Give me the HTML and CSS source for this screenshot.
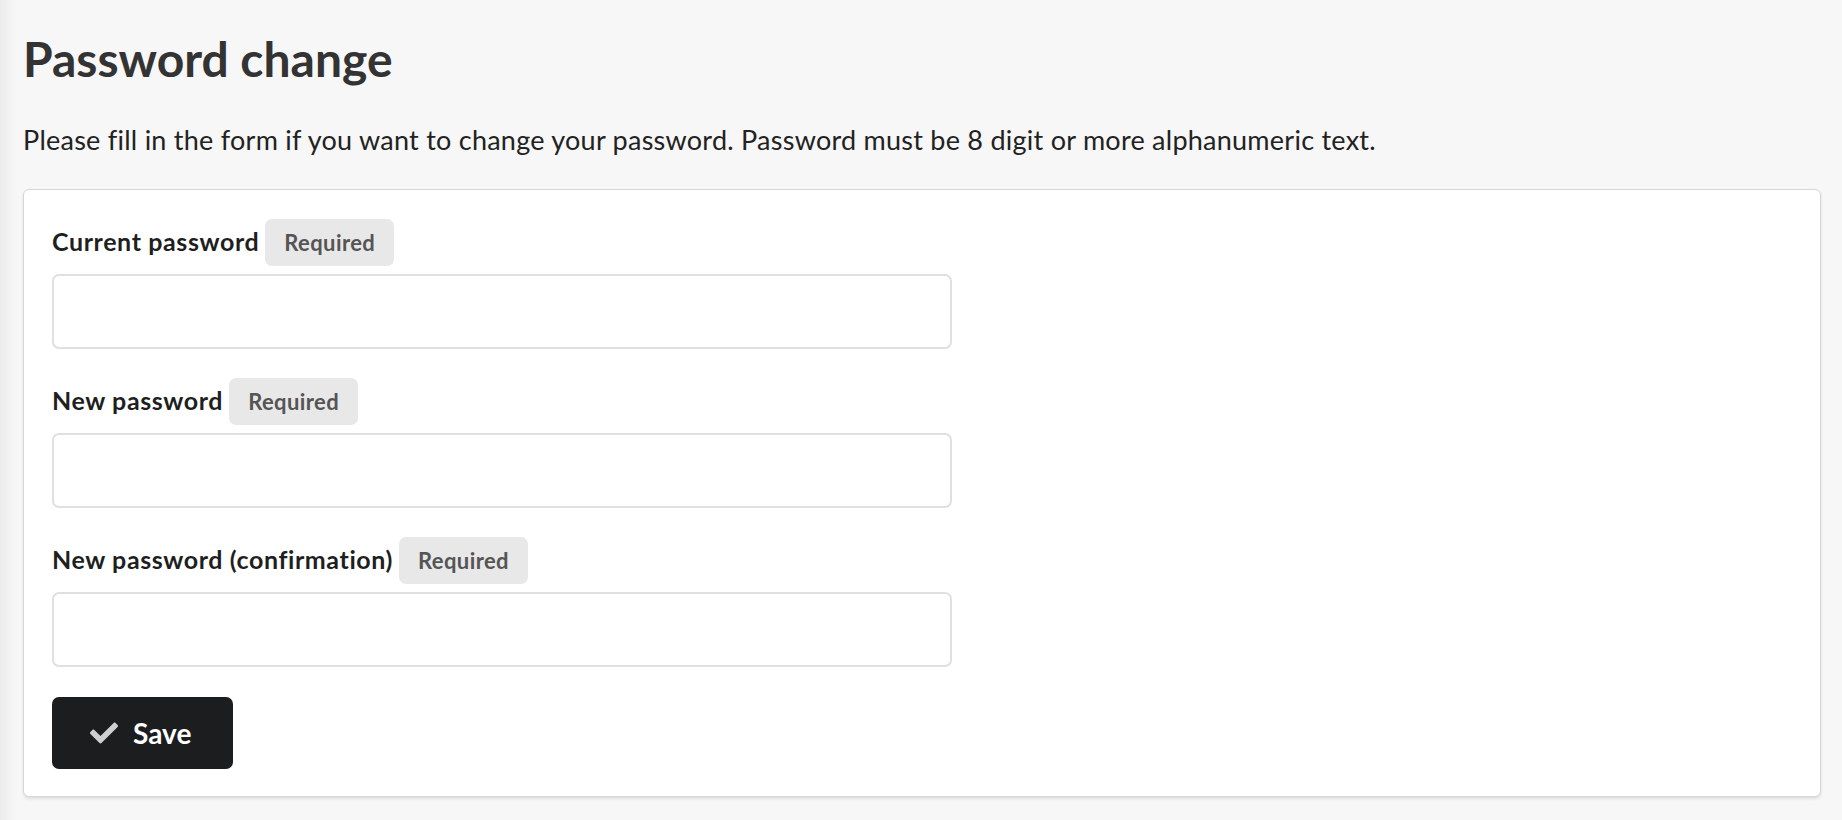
FILE: index.html
```html
<!DOCTYPE html>
<html lang="en">
<head>
<meta charset="utf-8">
<title>Password change</title>
<link rel="stylesheet" href="styles.css">
</head>
<body>
<main class="page">
  <h1 class="page-title">Password change</h1>
  <p class="page-lead">Please fill in the form if you want to change your password. Password must be 8 digit or more alphanumeric text.</p>

  <form class="card">
    <div class="field">
      <div class="field-head">
        <label class="field-label" for="old_password">Current password</label>
        <span class="badge">Required</span>
      </div>
      <input class="field-input" type="password" id="old_password" name="old_password">
    </div>

    <div class="field">
      <div class="field-head">
        <label class="field-label" for="new_password1">New password</label>
        <span class="badge">Required</span>
      </div>
      <input class="field-input" type="password" id="new_password1" name="new_password1">
    </div>

    <div class="field">
      <div class="field-head">
        <label class="field-label" for="new_password2">New password (confirmation)</label>
        <span class="badge">Required</span>
      </div>
      <input class="field-input" type="password" id="new_password2" name="new_password2">
    </div>

    <div class="actions">
      <button class="btn-save" type="submit">
        <svg class="btn-icon" viewBox="0 0 512 512" aria-hidden="true">
          <path d="M173.898 439.404l-166.4-166.4c-9.997-9.997-9.997-26.206 0-36.204l36.203-36.204c9.997-9.998 26.207-9.998 36.204 0L192 312.69 432.095 72.596c9.997-9.997 26.207-9.997 36.204 0l36.203 36.204c9.997 9.997 9.997 26.206 0 36.204l-294.4 294.401c-9.998 9.997-26.207 9.997-36.204-.001z"/>
        </svg>
        <span>Save</span>
      </button>
    </div>
  </form>
</main>
</body>
</html>
```

FILE: styles.css
```css
* {
  box-sizing: border-box;
}

html,
body {
  height: 100%;
}

body {
  margin: 0;
  font-family: Lato, "Noto Sans", "Liberation Sans", sans-serif;
  color: #222;
  background: linear-gradient(to right, #ececec 0, #f7f7f7 17px) #f7f7f7;
}

.page {
  padding: 30px 21px 0 23px;
}

.page-title {
  margin: 0;
  font-size: 48px;
  line-height: 58px;
  font-weight: 700;
  color: #333;
}

.page-lead {
  margin: 33px 0 30px;
  font-size: 27px;
  line-height: 38px;
  letter-spacing: 0.25px;
  color: #222;
}

.card {
  background: #fff;
  border: 1px solid #d6d6d6;
  border-radius: 6px;
  box-shadow: 0 2px 3px rgba(0, 0, 0, 0.1);
  padding: 28px 28px 27px;
}

.field + .field {
  margin-top: 28px;
}

.field-head {
  display: flex;
  align-items: baseline;
  gap: 6px;
  height: 47px;
  margin-bottom: 9px;
}

.field-label {
  font-size: 25px;
  font-weight: 700;
  letter-spacing: 0.6px;
  color: #1f1f1f;
  line-height: 47px;
}

.badge {
  display: inline-block;
  height: 47px;
  line-height: 47px;
  padding: 0 19px;
  border-radius: 7px;
  background: #e8e8e8;
  color: #555;
  font-size: 22px;
  font-weight: 700;
  letter-spacing: 0.4px;
}

.field-input {
  display: block;
  width: 900px;
  height: 75px;
  border: 2px solid #e0e0e0;
  border-radius: 7px;
  background: #fff;
  font: inherit;
  padding: 0 16px;
}

.actions {
  margin-top: 30px;
}

.btn-save {
  display: inline-flex;
  align-items: center;
  gap: 15px;
  height: 72px;
  padding: 0 42px 0 38px;
  border: 0;
  border-radius: 7px;
  background: #1c1d1f;
  color: #fff;
  font-family: inherit;
  font-size: 28px;
  font-weight: 700;
  cursor: pointer;
}

.btn-icon {
  width: 28px;
  height: 28px;
  fill: #cfcfcf;
}
```
